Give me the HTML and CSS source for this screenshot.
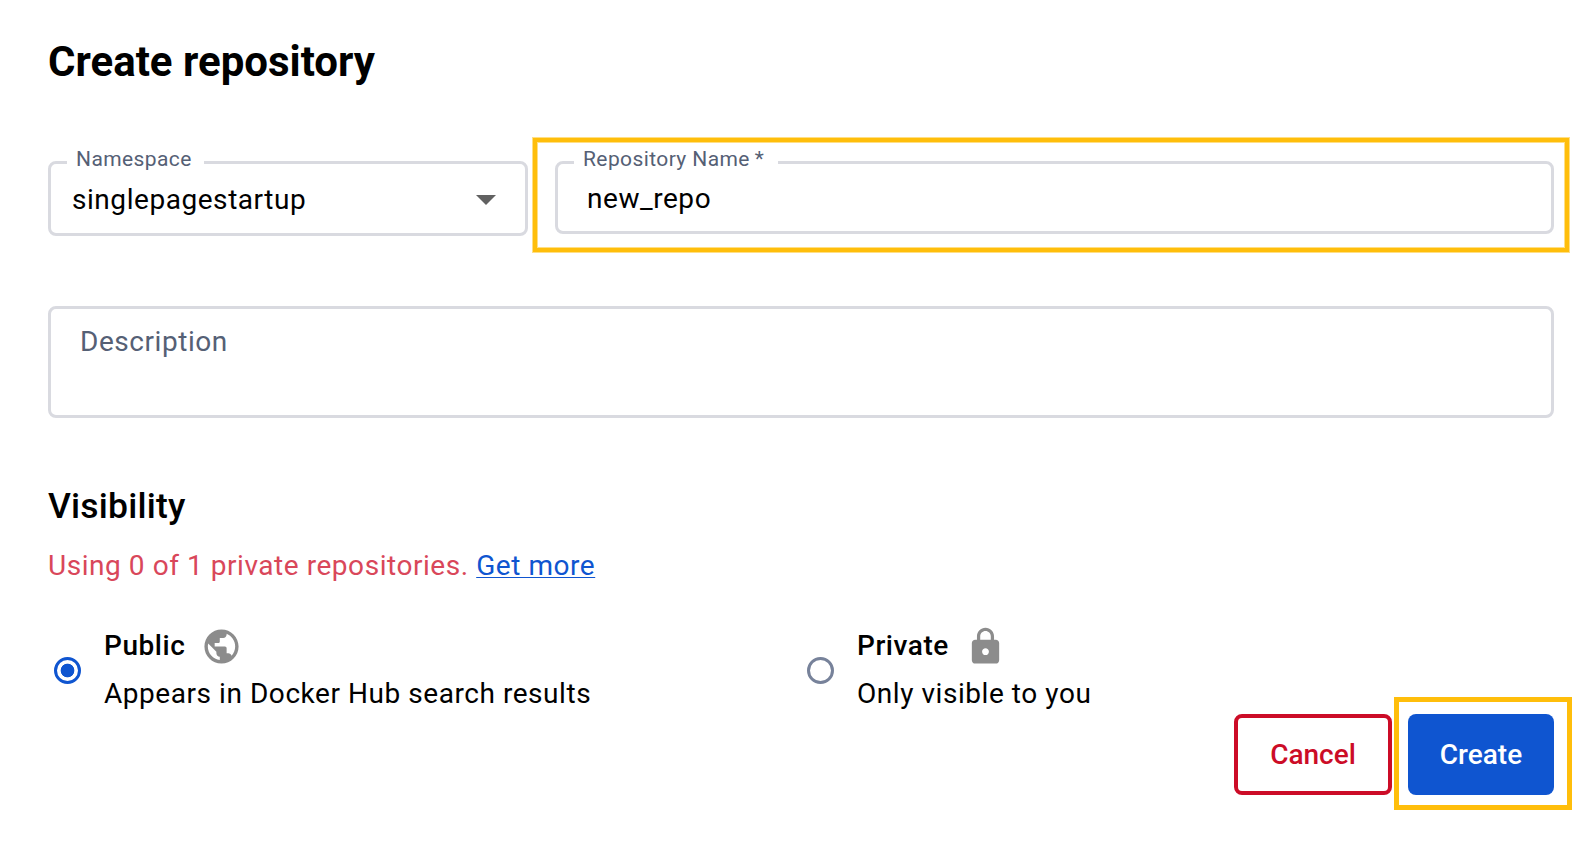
FILE: index.html
```html
<!DOCTYPE html>
<html lang="en">
<head>
<meta charset="utf-8">
<title>Create repository</title>
<link rel="stylesheet" href="styles.css">
</head>
<body>
<main class="page">
  <h1 class="title"><span>Create repository</span></h1>

  <div class="row">
    <fieldset class="field namespace">
      <legend><span>Namespace</span></legend>
      <div class="value"><span>singlepagestartup</span></div>
      <svg class="caret" width="20" height="10" viewBox="0 0 20 10"><path d="M0 0h20L10 10z"/></svg>
    </fieldset>
    <div class="highlight repo-wrap">
      <fieldset class="field repo">
        <legend><span>Repository Name<span class="star">*</span></span></legend>
        <div class="value"><span>new_repo</span></div>
      </fieldset>
    </div>
  </div>

  <div class="description"><span>Description</span></div>

  <h2 class="subtitle"><span>Visibility</span></h2>
  <p class="usage"><span>Using 0 of 1 private repositories.</span> <a>Get more</a></p>

  <div class="options">
    <div class="option">
      <i class="radio checked"></i>
      <div>
        <div class="name"><b class="public">Public</b>
          <svg class="icon" width="41" height="41" viewBox="0 0 24 24"><path d="M12 2C6.480 2 2 6.480 2 12s4.480 10 10 10 10-4.480 10-10S17.520 2 12 2zm-1 17.930c-3.950-.49-7-3.850-7-7.930 0-.62.08-1.210.21-1.790L9 15v1c0 1.100.9 2 2 2v1.930zm6.900-2.540c-.26-.81-1-1.390-1.900-1.390h-1v-3c0-.55-.45-1-1-1H8v-2h2c.55 0 1-.45 1-1V7h2c1.100 0 2-.9 2-2v-.41c2.930 1.190 5 4.060 5 7.410 0 2.080-.8 3.970-2.100 5.390z"/></svg>
        </div>
        <div class="hint"><span>Appears in Docker Hub search results</span></div>
      </div>
    </div>
    <div class="option">
      <i class="radio"></i>
      <div>
        <div class="name"><b class="private">Private</b>
          <svg class="icon" width="41" height="41" viewBox="0 0 24 24"><path d="M18 8h-1V6c0-2.760-2.240-5-5-5S7 3.240 7 6v2H6c-1.100 0-2 .9-2 2v10c0 1.100.9 2 2 2h12c1.100 0 2-.9 2-2V10c0-1.100-.9-2-2-2zm-6 9c-1.100 0-2-.9-2-2s.9-2 2-2 2 .9 2 2-.9 2-2 2zm3.100-9H8.900V6c0-1.710 1.390-3.100 3.100-3.100s3.100 1.390 3.100 3.100v2z"/></svg>
        </div>
        <div class="hint"><span>Only visible to you</span></div>
      </div>
    </div>
  </div>

  <div class="actions">
    <button class="btn cancel">Cancel</button>
    <div class="highlight create-wrap"><button class="btn create">Create</button></div>
  </div>
</main>
</body>
</html>
```
FILE: styles.css
```css
* { box-sizing: border-box; }
body {
  margin: 0;
  background: #fff;
  color: #000;
  font: 400 28px/40px Roboto, "Liberation Sans", sans-serif;
  letter-spacing: 0.55px;
}
.page {
  display: flex;
  flex-direction: column;
  height: 842px;
  padding: 32px 38px 0 48px;
  overflow: hidden;
}
.title {
  margin: 0;
  font-size: 42px;
  line-height: 60px;
  font-weight: 700;
  letter-spacing: 0;
}
.row {
  display: flex;
  gap: 27px;
  height: 75px;
  margin-top: 69px;
  align-items: flex-start;
}
.field {
  position: relative;
  display: flex;
  min-width: 0;
  margin: -9px 0 0;
  padding: 0 0 0 21px;
  border: 3px solid #d9dae0;
  border-radius: 8px;
}
.field legend {
  height: 21px;
  margin-left: -5px;
  padding: 0 0 0 9px;
  color: #556075;
  font-size: 21px;
  line-height: 14px;
  letter-spacing: 0.4px;
  white-space: nowrap;
}
.star { margin-left: 5px; }
.namespace { width: 480px; height: 84px; }
.namespace legend { width: 137px; }
.namespace .value { margin-top: 7px; }
.repo { width: 999px; height: 82px; padding-left: 29px; }
.repo legend { width: 204px; margin-left: -13px; }
.repo .value { margin-top: 6px; }
.caret {
  margin: 22px 29px 0 auto;
  fill: #616161;
}
.highlight { position: relative; }
.highlight::after {
  content: "";
  position: absolute;
  border: 5px solid #ffbe0b;
  pointer-events: none;
}
.repo-wrap::after {
  inset: -23px -15px -18px -22px;
  border-width: 4px;
  box-shadow: 0 0 0 1px #ffdf85, inset 0 0 0 1px #ffdf85;
}
.description {
  height: 112px;
  margin-top: 70px;
  padding: 13px 29px;
  border: 3px solid #d9dae0;
  border-radius: 8px;
  color: #556075;
}
.subtitle {
  margin: 63px 0 0;
  font-size: 35.5px;
  line-height: 50px;
  font-weight: 500;
  letter-spacing: 0.2px;
}
.usage { margin: 15px 0 0; color: #d9475a; }
.usage a {
  color: #0f55d0;
  text-decoration: underline;
  text-decoration-thickness: 1px;
  text-underline-offset: 2px;
}
.options {
  display: grid;
  grid-template-columns: 753px 1fr;
  margin-top: 40px;
  height: 88px;
}
.option { display: flex; gap: 23px; padding-left: 6px; }
.radio {
  flex: none;
  width: 27px;
  height: 27px;
  margin-top: 31px;
  border: 3px solid #77829a;
  border-radius: 50%;
}
.radio.checked {
  border-color: #0f55d0;
  background: radial-gradient(circle, #0f55d0 6.5px, #fff 7.2px);
}
.name { display: flex; height: 40px; }
.name b { font-weight: 500; }
.icon { margin: -0.5px 0 0 16px; fill: #8c8c8c; }
.hint { margin-top: 8px; }
.actions { display: flex; justify-content: flex-end; gap: 16px; }
.btn {
  display: block;
  height: 81px;
  padding: 0;
  border: 0;
  border-radius: 8px;
  font: 500 28px/40px Roboto, "Liberation Sans", sans-serif;
  letter-spacing: 0;
}
.cancel { width: 158px; border: 4px solid #cc0c27; background: #fff; color: #cc0c27; }
.create { width: 146px; background: #0f55d0; color: #fff; }
.create-wrap::after { inset: -17px -18px -15px -14px; }
```
